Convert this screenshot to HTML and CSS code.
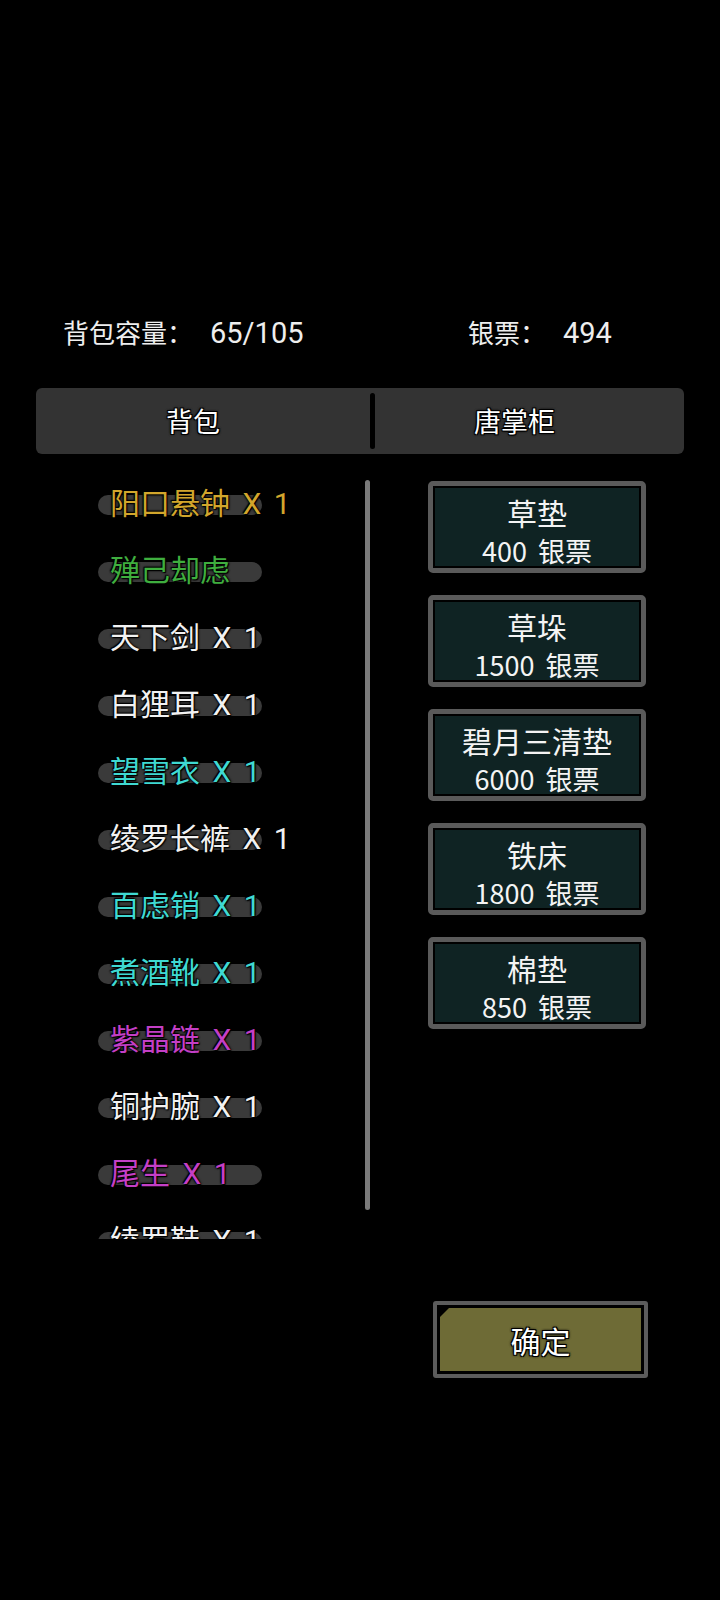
FILE: index.html
```html
<!DOCTYPE html>
<html lang="zh">
<head>
<meta charset="utf-8">
<title>背包</title>
<link rel="stylesheet" href="styles.css">
</head>
<body>
<div class="page">
  <div class="stats">
    <div class="stat stat-left"><span class="cjk">背包容量：</span><span class="num">65/105</span></div>
    <div class="stat"><span class="cjk">银票：</span><span class="num">494</span></div>
  </div>

  <div class="tabs">
    <div class="tab tab-left">背包</div>
    <div class="tab-divider"></div>
    <div class="tab tab-right">唐掌柜</div>
  </div>

  <div class="content">
    <div class="bag">
      <div class="bag-list">
        <div class="item"><span class="label gold">阳口悬钟 X 1</span></div>
        <div class="item"><span class="label green">殚己却虑</span></div>
        <div class="item"><span class="label white">天下剑 X 1</span></div>
        <div class="item"><span class="label white">白狸耳 X 1</span></div>
        <div class="item"><span class="label cyan">望雪衣 X 1</span></div>
        <div class="item"><span class="label white">绫罗长裤 X 1</span></div>
        <div class="item"><span class="label cyan">百虑销 X 1</span></div>
        <div class="item"><span class="label cyan">煮酒靴 X 1</span></div>
        <div class="item"><span class="label purple">紫晶链 X 1</span></div>
        <div class="item"><span class="label white">铜护腕 X 1</span></div>
        <div class="item"><span class="label purple">尾生 X 1</span></div>
        <div class="item"><span class="label white">绫罗鞋 X 1</span></div>
      </div>
      <div class="scrollbar"></div>
    </div>

    <div class="shop">
      <div class="goods"><div class="goods-name">草垫</div><div class="goods-price">400 银票</div></div>
      <div class="goods"><div class="goods-name">草垛</div><div class="goods-price">1500 银票</div></div>
      <div class="goods"><div class="goods-name">碧月三清垫</div><div class="goods-price">6000 银票</div></div>
      <div class="goods"><div class="goods-name">铁床</div><div class="goods-price">1800 银票</div></div>
      <div class="goods"><div class="goods-name">棉垫</div><div class="goods-price">850 银票</div></div>
    </div>
  </div>

  <div class="footer">
    <div class="confirm"><div class="confirm-inner">确定</div></div>
  </div>
</div>
</body>
</html>
```
FILE: styles.css
```css
* { box-sizing: border-box; }

html, body {
  margin: 0;
  padding: 0;
  background: #000;
}

body {
  width: 720px;
  height: 1600px;
  overflow: hidden;
  font-family: "Noto Sans CJK SC", "Noto Sans", sans-serif;
  color: #f2f2f2;
}

.page {
  width: 720px;
  height: 1600px;
  padding-top: 312px;
  overflow: hidden;
}

/* header stats */
.stats {
  display: flex;
  padding-left: 63px;
  height: 40px;
  line-height: 40px;
  font-size: 27px;
  color: #eeeeee;
}
.stat-left { width: 405px; }
.cjk { font-family: "Noto Sans CJK SC", sans-serif; font-size: 26px; }
.num {
  font-family: Roboto, "Noto Sans", sans-serif;
  font-size: 29px;
  margin-left: 17px;
}

/* tab bar */
.tabs {
  display: flex;
  align-items: center;
  margin: 36px 36px 0 36px;
  height: 66px;
  background: #333333;
  border-radius: 6px;
}
.tab {
  font-size: 27px;
  line-height: 66px;
  text-align: center;
  color: #fff;
  text-shadow: -1px -1px 0 #000, 1px -1px 0 #000, -1px 1px 0 #000, 1px 1px 0 #000,
               0 0 3px #000, 0 0 3px #000;
}
.tab-left { width: 314px; }
.tab-divider {
  width: 5px;
  height: 56px;
  margin-left: 20px;
  background: #000;
  border-radius: 3px;
}
.tab-right {
  flex: 1;
  padding-right: 30px;
}

/* content */
.content {
  display: flex;
  margin-top: 16px;
}

.bag {
  display: flex;
  width: 428px;
}
.bag-list {
  width: 365px;
  height: 769px;
  overflow: hidden;
}
.item {
  position: relative;
  height: 67px;
  display: flex;
  align-items: center;
  padding-left: 110px;
}
.item::before {
  content: "";
  position: absolute;
  left: 98px;
  top: 50%;
  width: 164px;
  height: 20px;
  margin-top: -9px;
  background: #3a3a3a;
  border-radius: 10px;
}
.label {
  position: relative;
  font-family: Roboto, "Noto Sans CJK SC", sans-serif;
  font-size: 30px;
  line-height: 40px;
  white-space: nowrap;
  word-spacing: 5px;
  text-shadow: 0 0 2px #000, 0 0 3px #000, 1px 1px 1px #000, -1px -1px 1px #000;
}
.gold { color: #d2a62c; }
.green { color: #3fae3f; }
.white { color: #f2f2f2; }
.cyan { color: #3fd9d2; }
.purple { color: #c43fc6; }

.scrollbar {
  width: 5px;
  height: 730px;
  margin-top: 10px;
  background: #7a7a7a;
  border-radius: 3px;
}

/* shop */
.shop {
  display: flex;
  flex-direction: column;
  gap: 22px;
  margin-top: 11px;
  width: 218px;
}
.goods {
  height: 92px;
  border: 5px solid #5a5a5a;
  border-radius: 5px;
  background: #0f2323;
  box-shadow: inset 0 0 0 2px #000;
  text-align: center;
  color: #f4f4f4;
  padding-top: 8px;
}
.goods-name {
  font-size: 30px;
  line-height: 36px;
}
.goods-price {
  font-size: 27px;
  line-height: 34px;
  margin-top: 4px;
  word-spacing: 5px;
}

/* footer */
.footer {
  margin-top: 62px;
  padding-left: 433px;
}
.confirm {
  width: 215px;
  height: 77px;
  border: 4px solid #5c5c5c;
  border-radius: 3px;
  background: #000;
  padding: 3px;
}
.confirm-inner {
  height: 100%;
  background: #6e6b36;
  clip-path: polygon(9px 0, 100% 0, 100% 100%, 0 100%, 0 9px);
  display: flex;
  align-items: center;
  justify-content: center;
  font-size: 30px;
  color: #fff;
  text-shadow: -1px -1px 0 #000, 1px -1px 0 #000, -1px 1px 0 #000, 1px 1px 0 #000,
               0 0 3px #000, 0 0 3px #000;
}
```
